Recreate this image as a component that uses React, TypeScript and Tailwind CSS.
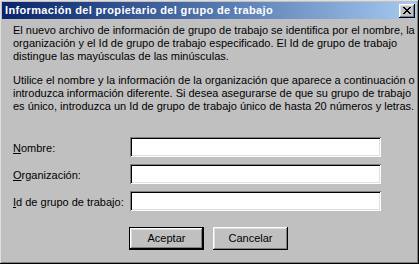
import React from 'react';

const raised =
  'shadow-[inset_-1px_-1px_#000000,inset_1px_1px_#ffffff,inset_-2px_-2px_#808080,inset_2px_2px_#dfdfdf]';
const sunken =
  'shadow-[inset_1px_1px_#808080,inset_-1px_-1px_#ffffff,inset_2px_2px_#000000,inset_-2px_-2px_#dfdfdf]';

function Field({ label, accel, rest }: { label?: string; accel: string; rest: string }) {
  return (
    <div className="flex items-center h-[20px]">
      <label className="w-[117px] pt-[3px] whitespace-nowrap">
        <span className="underline underline-offset-1">{accel}</span>
        {rest}
      </label>
      <div className={`w-[251px] h-[20px] bg-white ${sunken}`} aria-label={label} />
    </div>
  );
}

export default function App() {
  return (
    <div className="w-[419px] h-[264px] bg-[#c0c0c0] pt-[2px] pl-[2px] pr-[2px] shadow-[inset_-1px_-1px_#000000,inset_1px_1px_#dfdfdf,inset_-2px_-2px_#808080] font-['Liberation_Sans',Arial,sans-serif] text-[11px] leading-[13px] text-black">
      {/* Title bar */}
      <div className="h-[17px] flex items-center justify-between pl-[3px] pr-[2px] bg-linear-to-r from-[#0a246a] to-[#a6caf0]">
        <span className="text-white font-bold text-[11px] tracking-[0.35px]">
          Información del propietario del grupo de trabajo
        </span>
        <button className={`w-[16px] h-[14px] bg-[#c0c0c0] flex items-center justify-center ${raised}`}>
          <svg width="8" height="7" viewBox="0 0 8 7" shapeRendering="crispEdges">
            <path d="M0 0h2v1h-2zM6 0h2v1h-2zM1 1h2v1h-2zM5 1h2v1h-2zM2 2h4v1h-4zM3 3h2v1h-2zM2 4h4v1h-4zM1 5h2v1h-2zM5 5h2v1h-2zM0 6h2v1h-2zM6 6h2v1h-2z" fill="#000" />
          </svg>
        </button>
      </div>

      <div className="pl-[11px] pt-[5px]">
        <p className="whitespace-nowrap">
          El nuevo archivo de información de grupo de trabajo se identifica por el nombre, la
          <br />
          organización y el Id de grupo de trabajo especificado. El Id de grupo de trabajo
          <br />
          distingue las mayúsculas de las minúsculas.
        </p>
        <p className="whitespace-nowrap mt-[11px]">
          Utilice el nombre y la información de la organización que aparece a continuación o
          <br />
          introduzca información diferente. Si desea asegurarse de que su grupo de trabajo
          <br />
          es único, introduzca un Id de grupo de trabajo único de hasta 20 números y letras.
        </p>

        <div className="flex flex-col gap-[7px] mt-[24px]">
          <Field label="Nombre" accel="N" rest="ombre:" />
          <Field label="Organización" accel="O" rest="rganización:" />
          <Field label="Id de grupo de trabajo" accel="I" rest="d de grupo de trabajo:" />
        </div>

        <div className="flex gap-[9px] pl-[116px] mt-[16px]">
          <button className={`w-[75px] h-[23px] bg-[#c0c0c0] border border-black ${raised}`}>
            Aceptar
          </button>
          <button className={`w-[75px] h-[23px] bg-[#c0c0c0] ${raised}`}>Cancelar</button>
        </div>
      </div>
    </div>
  );
}
